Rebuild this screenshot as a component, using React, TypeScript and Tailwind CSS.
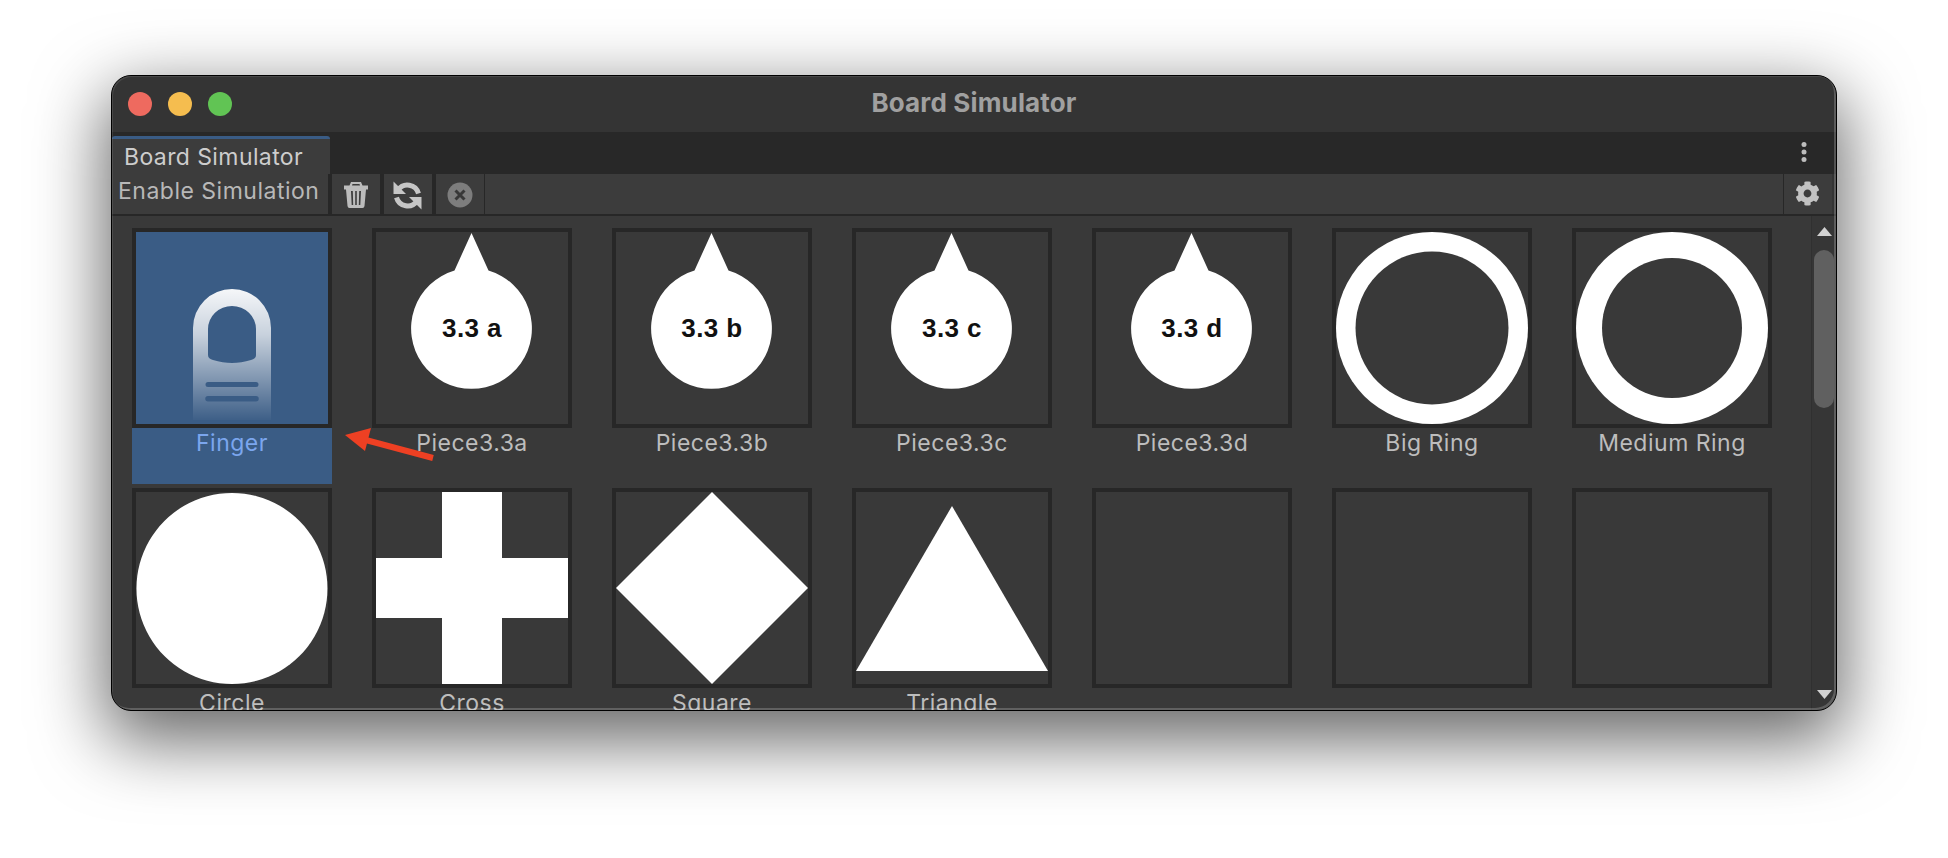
import { FaCog } from "react-icons/fa";

const font = "font-['Inter','Noto_Sans',sans-serif]";

function Drop({ letter }: { letter: string }) {
  return (
    <div className="relative w-full h-full">
      <svg viewBox="0 0 192 192" className="absolute inset-0 w-full h-full">
        <path d="M95.5 1 L112.5 38.5 A60.4 60.4 0 1 1 78.5 38.5 Z" fill="#fff" />
      </svg>
      <div className="absolute left-0 right-0 top-[76px] text-center text-[26px] leading-[40px] font-bold text-[#111] font-['Liberation_Sans',sans-serif] tracking-[0.4px]">
        3.3 {letter}
      </div>
    </div>
  );
}

function Finger() {
  return (
    <svg viewBox="0 0 192 192" className="w-full h-full">
      <defs>
        <linearGradient id="fg" x1="0" y1="0" x2="0" y2="1">
          <stop offset="0" stopColor="#fff" stopOpacity="0.95" />
          <stop offset="0.35" stopColor="#fff" stopOpacity="0.72" />
          <stop offset="1" stopColor="#fff" stopOpacity="0.02" />
        </linearGradient>
      </defs>
      <path
        fillRule="evenodd"
        fill="url(#fg)"
        d="M57 188 V96 A39 39 0 0 1 135 96 V188 Z M72 97 V123 C72 126 74 127 77 128 C90 132 102 132 115 128 C118 127 120 126 120 123 V97 A24 23 0 0 0 72 97 Z M72 150 A2.5 2.5 0 0 0 72 155 H120 A2.5 2.5 0 0 0 120 150 Z M72 164 A2.5 2.5 0 0 0 72 169.5 H120 A2.5 2.5 0 0 0 120 164 Z"
      />
    </svg>
  );
}

function Ring({ inner }: { inner: number }) {
  return (
    <svg viewBox="0 0 192 192" className="w-full h-full">
      <circle cx="96" cy="96" r="96" fill="#fff" />
      <circle cx="96" cy="96" r={inner} fill="#393939" />
    </svg>
  );
}

function Shape({ d }: { d: string }) {
  return (
    <svg viewBox="0 0 192 192" className="w-full h-full">
      <path d={d} fill="#fff" />
    </svg>
  );
}

const items: { name: string; art?: React.ReactNode; selected?: boolean }[] = [
  { name: "Finger", art: <Finger />, selected: true },
  { name: "Piece3.3a", art: <Drop letter="a" /> },
  { name: "Piece3.3b", art: <Drop letter="b" /> },
  { name: "Piece3.3c", art: <Drop letter="c" /> },
  { name: "Piece3.3d", art: <Drop letter="d" /> },
  { name: "Big Ring", art: <Ring inner={76.5} /> },
  { name: "Medium Ring", art: <Ring inner={70} /> },
  { name: "Circle", art: <Shape d="M96 1 A95.5 95.5 0 1 1 95.9 1 Z" /> },
  { name: "Cross", art: <Shape d="M66 0 H126 V66 H192 V126 H126 V192 H66 V126 H0 V66 H66 Z" /> },
  { name: "Square", art: <Shape d="M96 0 L192 96 L96 192 L0 96 Z" /> },
  { name: "Triangle", art: <Shape d="M96 14 L192 179 H0 Z" /> },
  { name: "" },
  { name: "" },
  { name: "" },
];

function Cell({ name, art, selected }: { name: string; art?: React.ReactNode; selected?: boolean }) {
  return (
    <div className="w-[200px] h-[256px] flex flex-col">
      <div className={`w-[200px] h-[200px] border-[4px] border-[#272727] ${selected ? "bg-[#3a5c85]" : ""}`}>{art}</div>
      <div
        className={`h-[56px] text-center text-[23px] leading-[31px] tracking-[0.5px] ${
          selected ? "bg-[#3a5c85] text-[#7ba6ee]" : "text-[#bdbdbd]"
        }`}
      >
        {name}
      </div>
    </div>
  );
}

export default function App() {
  return (
    <div className={`w-[1948px] h-[858px] bg-white overflow-hidden pl-[111px] pt-[75px] ${font}`}>
      <div className="relative w-[1726px] h-[636px] rounded-[20px] border border-black bg-[#393939] overflow-hidden shadow-[0_24px_70px_6px_rgba(0,0,0,0.6)] flex flex-col">
        {/* Title bar */}
        <div className="relative h-[56px] shrink-0 bg-[#343434] flex items-center justify-center">
          <div className="absolute left-[16px] top-[16px] flex gap-[16px]">
            <span className="w-[24px] h-[24px] rounded-full bg-[#ee6a5f]" />
            <span className="w-[24px] h-[24px] rounded-full bg-[#f5bd4f]" />
            <span className="w-[24px] h-[24px] rounded-full bg-[#61c454]" />
          </div>
          <span className="text-[26px] font-bold text-[#a0a0a0] tracking-[0.15px] -mt-[3px]">Board Simulator</span>
        </div>
        {/* Tab bar */}
        <div className="h-[42px] shrink-0 bg-[#282828] flex items-end justify-between">
          <div className="w-[218px] h-[38px] bg-[#3c3c3c] border-t-[3px] border-[#3a5c85] rounded-t-[3px] pl-[12px] text-[23px] leading-[37px] text-[#cdcdcd] tracking-[0.4px]">
            Board Simulator
          </div>
          <svg width="6" height="20" viewBox="0 0 6 20" className="mr-[29px] mb-[12px]" fill="#bdbdbd">
            <circle cx="3" cy="2.5" r="2.5" />
            <circle cx="3" cy="10" r="2.5" />
            <circle cx="3" cy="17.5" r="2.5" />
          </svg>
        </div>
        {/* Toolbar */}
        <div className="h-[42px] shrink-0 bg-[#272727] pb-[2px] flex">
          <div className="w-[216px] h-[40px] bg-[#3c3c3c] pl-[6px] text-[23px] leading-[34px] text-[#b8b8b8] tracking-[0.5px]">
            Enable Simulation
          </div>
          <div className="ml-[4px] w-[48px] h-[40px] bg-[#3c3c3c] flex items-center justify-center">
            <svg width="24" height="26" viewBox="0 0 24 26" className="mt-[2px]" fill="#bcbcbc">
              <path
                fillRule="evenodd"
                d="M7 0 H17 L18.5 3.5 H24 V7.5 H22 L20.5 24 Q20.3 26 18.5 26 H5.5 Q3.7 26 3.5 24 L2 7.5 H0 V3.5 H5.5 Z M8.5 2 L8 3.5 H16 L15.5 2 Z M7 9 L7.7 23 H9.2 L8.8 9 Z M11.2 9 V23 H12.8 V9 Z M15.2 9 L14.8 23 H16.3 L17 9 Z"
              />
            </svg>
          </div>
          <div className="ml-[4px] w-[48px] h-[40px] bg-[#3c3c3c] flex items-center justify-center">
            <svg width="29" height="29" viewBox="0 0 29 29" className="mt-[2px] -ml-[1px]">
              <path d="M0.5 0.5 V13 H13 Z" fill="#c6c6c6" />
              <path d="M28.5 28.5 V16 H16 Z" fill="#c6c6c6" />
              <path d="M5 9 A11.5 11.5 0 0 1 25.5 12.5" stroke="#c6c6c6" strokeWidth="5" fill="none" />
              <path d="M24 20 A11.5 11.5 0 0 1 3.5 16.5" stroke="#c6c6c6" strokeWidth="5" fill="none" />
            </svg>
          </div>
          <div className="ml-[4px] w-[48px] h-[40px] bg-[#3c3c3c] flex items-center justify-center">
            <svg width="26" height="26" viewBox="0 0 26 26" className="mt-[1px]">
              <circle cx="13" cy="13" r="12.5" fill="#7d7d7d" />
              <path d="M8.5 8.5 L17.5 17.5 M17.5 8.5 L8.5 17.5" stroke="#383838" strokeWidth="3" />
            </svg>
          </div>
          <div className="ml-[1px] flex-1 h-[40px] bg-[#3c3c3c]" />
          <div className="ml-[1px] w-[48px] h-[40px] bg-[#3c3c3c] flex items-center justify-center">
            <FaCog className="w-[25px] h-[25px] text-[#c2c2c2] -mt-[2px] -ml-[1px]" />
          </div>
          <div className="w-[4px] h-[40px] bg-[#343434]" />
        </div>
        {/* Content */}
        <div className="flex-1 min-h-0 flex">
          <div className="flex-1 overflow-hidden pl-[20px] pt-[12px]">
            <div className="grid grid-cols-[repeat(7,200px)] gap-x-[40px] gap-y-[4px]">
              {items.map((it, i) => (
                <Cell key={i} {...it} />
              ))}
            </div>
          </div>
          <div className="w-[25px] shrink-0 bg-[#363636] border-l border-[#303030] flex flex-col items-start pl-[2px]">
            <svg width="15" height="9" viewBox="0 0 15 9" className="mt-[11px] ml-[3px]" fill="#d2d2d2">
              <path d="M7.5 0 L15 9 H0 Z" />
            </svg>
            <div className="mt-[14px] w-[20px] h-[158px] rounded-[10px] bg-[#606060]" />
            <div className="flex-1" />
            <svg width="15" height="9" viewBox="0 0 15 9" className="mb-[11px] ml-[3px]" fill="#d2d2d2">
              <path d="M0 0 H15 L7.5 9 Z" />
            </svg>
          </div>
        </div>
        {/* Annotation arrow */}
        <svg width="100" height="40" viewBox="0 0 100 40" className="absolute left-[232px] top-[351px]">
          <path d="M1 8 L27 1 L21 24 Z" fill="#ee4023" />
          <path d="M18 12 L89 31" stroke="#ee4023" strokeWidth="6" fill="none" />
        </svg>
        {/* Window rim highlight */}
        <div className="absolute inset-0 rounded-[19px] pointer-events-none shadow-[inset_-2px_-2px_0_0_rgba(255,255,255,0.2),inset_1px_1px_0_0_rgba(255,255,255,0.1)]" />
      </div>
    </div>
  );
}
